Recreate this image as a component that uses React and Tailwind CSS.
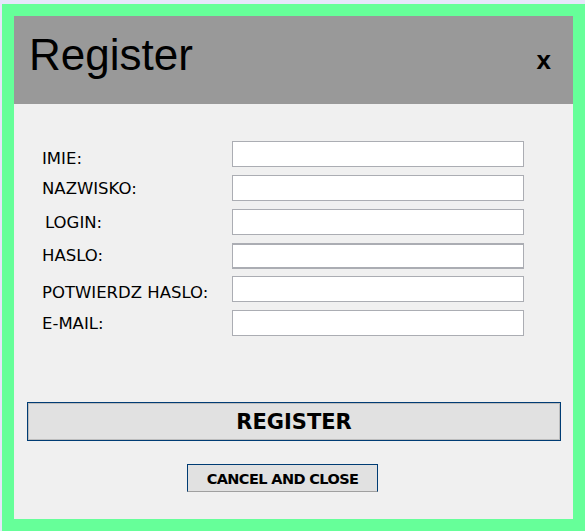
export default function App() {
  const rows = [
    { label: "IMIE:", pt: "pt-[10px]", ml: "ml-0", mt: "mt-0", thick: false },
    { label: "NAZWISKO:", pt: "pt-[6px]", ml: "ml-0", mt: "mt-[8px]", thick: false },
    { label: "LOGIN:", pt: "pt-[6px]", ml: "ml-[3px]", mt: "mt-[8px]", thick: false },
    { label: "HASLO:", pt: "pt-[5px]", ml: "ml-0", mt: "mt-[8px]", thick: true },
    { label: "POTWIERDZ HASLO:", pt: "pt-[9px]", ml: "ml-0", mt: "mt-[7px]", thick: false },
    { label: "E-MAIL:", pt: "pt-[6px]", ml: "ml-0", mt: "mt-[8px]", thick: false },
  ];
  return (
    <div className="w-[585px] h-[531px] bg-[#e6e6fa] pl-[2px] pt-[4px] overflow-hidden">
      <div className="w-[583px] h-[527px] border-[12px] border-[#66ff99] flex flex-col">
        <div className="h-[88px] bg-[#999999] flex justify-between items-start pl-[15px] pr-[22px] shrink-0">
          <div className="mt-[17px] text-[44px] leading-none text-black font-['Liberation_Sans',Arial,sans-serif]">
            Register
          </div>
          <div className="mt-[31px] text-[26px] leading-none font-bold text-black font-['Liberation_Sans',Arial,sans-serif]">
            x
          </div>
        </div>
        <div className="flex-1 bg-[#f0f0f0] flex flex-col pt-[37px] font-['DejaVu_Sans',Verdana,sans-serif] text-black">
          <div className="flex flex-col">
            {rows.map((r) => (
              <div key={r.label} className={`flex h-[26px] ${r.mt}`}>
                <div className={`w-[218px] pl-[28px] ${r.pt}`}>
                  <span className={`block text-[16.5px] leading-none whitespace-nowrap ${r.ml}`}>{r.label}</span>
                </div>
                <div
                  className={
                    r.thick
                      ? "w-[292px] h-[26px] bg-white border-x border-y-2 border-[#abadb3]"
                      : "w-[292px] h-[26px] bg-white border border-[#abadb3]"
                  }
                />
              </div>
            ))}
          </div>
          <div className="mt-[66px] ml-[13px] w-[534px] h-[39px] bg-[#e1e1e1] border border-[#003c74] shadow-[inset_0_0_0_1px_#bdbdbd] flex items-center justify-center pt-[2px]">
            <span className="text-[21px] leading-none font-bold">REGISTER</span>
          </div>
          <div className="mt-[23px] ml-[173px] w-[191px] h-[28px] bg-[#e1e1e1] border border-[#003c74] border-b-[#a0a0a0] flex items-center justify-center pt-[2px]">
            <span className="text-[14.5px] leading-none font-bold tracking-[-0.6px] whitespace-nowrap">CANCEL AND CLOSE</span>
          </div>
        </div>
      </div>
    </div>
  );
}
